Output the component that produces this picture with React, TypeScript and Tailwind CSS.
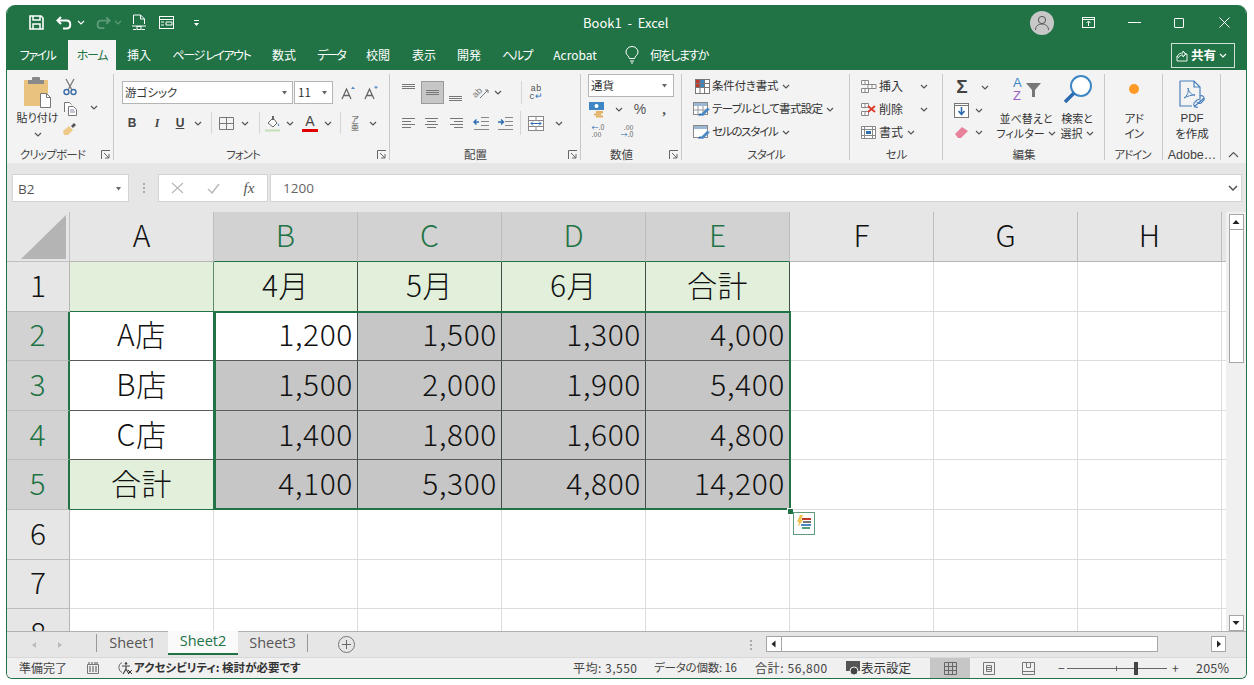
import React from "react";

const jp = "[font-family:'Noto_Sans_CJK_JP','Liberation_Sans',sans-serif] [font-feature-settings:'palt']";

function Caret({ className = "", color = "#555" }: { className?: string; color?: string }) {
  return (
    <svg width="8" height="5" viewBox="0 0 8 5" className={className}>
      <path d="M1 1l3 3 3-3" fill="none" stroke={color} strokeWidth="1.2" />
    </svg>
  );
}
function Tri({ className = "" }: { className?: string }) {
  return (
    <svg width="7" height="4" viewBox="0 0 7 4" className={className}>
      <path d="M1 0h5L3.5 3.5z" fill="#666" />
    </svg>
  );
}
function Launcher() {
  return (
    <svg width="10" height="10" viewBox="0 0 10 10" className="absolute right-[3px] bottom-[3px]">
      <path d="M.5 9V.5H9M3 3l5 5M8 4v4H4" fill="none" stroke="#666" strokeWidth="1" />
    </svg>
  );
}
function Lines({ kind }: { kind: "l" | "c" | "r" | "t" | "m" | "b" }) {
  const rows =
    kind === "l"
      ? [[1, 14], [1, 10], [1, 14], [1, 10]]
      : kind === "c"
      ? [[1, 14], [3, 12], [1, 14], [3, 12]]
      : kind === "r"
      ? [[1, 14], [5, 14], [1, 14], [5, 14]]
      : [[1, 14], [1, 14], [1, 14]];
  const y0 = kind === "t" ? 2 : kind === "m" ? 5 : kind === "b" ? 9 : 3;
  return (
    <svg width="16" height="16" viewBox="0 0 16 16">
      {rows.map((r, i) => (
        <path key={i} d={`M${r[0]} ${y0 + i * (kind === "t" || kind === "m" || kind === "b" ? 2 : 3) + 0.5}H${r[1]}`} stroke="#777" strokeWidth="1" />
      ))}
    </svg>
  );
}
function IconSlot({ w, children, className = "" }: { w: string; children?: React.ReactNode; className?: string }) {
  return <div className={`${w} flex items-center justify-center shrink-0 ${className}`}>{children}</div>;
}
function VSep({ h = "h-[22px]" }: { h?: string }) {
  return <div className={`w-px ${h} bg-[#d6d6d6] shrink-0`} />;
}

function TitleBar() {
  return (
    <div className="h-[35px] bg-[#217346] flex items-center text-white relative shrink-0">
      <svg width="15" height="15" viewBox="0 0 15 15" className="ml-[22px]">
        <path d="M1 1h11l2 2v11H1z" fill="none" stroke="#fff" strokeWidth="1.6" />
        <path d="M4 1v4h7V1M4 14V9h7v5" fill="none" stroke="#fff" strokeWidth="1.5" />
      </svg>
      <svg width="17" height="14" viewBox="0 0 17 14" className="ml-[12px]">
        <path d="M5 1L1.5 4.5 5 8M2 4.5h8.5c5 0 5 8 0 8H7" fill="none" stroke="#fff" strokeWidth="2" />
      </svg>
      <Caret className="ml-[4px]" color="#fff" />
      <svg width="16" height="14" viewBox="0 0 17 14" className="ml-[10px]">
        <path d="M12 1l3.5 3.5L12 8M15 4.5H6.5c-5 0-5 8 0 8H10" fill="none" stroke="#5f9a7b" strokeWidth="2" />
      </svg>
      <Caret className="ml-[3px]" color="#5f9a7b" />
      <svg width="14" height="17" viewBox="0 0 14 17" className="ml-[10px]">
        <path d="M1.5 10V1h7l4 4v5M8.5 1v4h4" fill="none" stroke="#fff" strokeWidth="1" />
        <path d="M0 12h14M1 15.5h3M6 15.5h2M10 15.5h3" stroke="#fff" strokeWidth="1.2" fill="none" />
        <rect x="5" y="12.5" width="4" height="3" fill="none" stroke="#fff" />
      </svg>
      <svg width="15" height="13" viewBox="0 0 15 13" className="ml-[13px]">
        <rect x=".5" y=".5" width="14" height="12" fill="none" stroke="#fff" />
        <path d="M.5 3.5h14M2 6h3M2 9h3M7 6h6v3H7z" stroke="#fff" fill="none" />
      </svg>
      <svg width="7" height="8" viewBox="0 0 7 8" className="ml-[19px]">
        <path d="M1 1.5h5" stroke="#fff" />
        <path d="M1 4h5L3.5 7z" fill="#fff" />
      </svg>
      <div className={`absolute left-[576px] top-[9px] text-[13px] leading-[18px] ${jp} whitespace-pre`}>Book1  -  Excel</div>
      <div className="ml-auto flex items-center">
        <div className="w-[24px] h-[24px] rounded-full bg-[#c8c8c8] flex items-center justify-center">
          <svg width="16" height="16" viewBox="0 0 16 16">
            <circle cx="8" cy="5" r="3.6" fill="none" stroke="#555" />
            <path d="M1.5 15c0-4 3-6 6.5-6s6.500 2 6.500 6" fill="none" stroke="#555" />
          </svg>
        </div>
        <svg width="13" height="11" viewBox="0 0 13 11" className="ml-[28px]">
          <rect x=".5" y=".5" width="12" height="10" fill="none" stroke="#fff" />
          <path d="M.5 2.500h12" stroke="#fff" />
          <path d="M6.500 9V4.500M4.500 6l2-2 2 2" stroke="#fff" fill="none" />
        </svg>
        <div className="ml-[33px] w-[13px] h-px bg-white" />
        <div className="ml-[33px] w-[10px] h-[10px] border border-white rounded-[1px]" />
        <svg width="11" height="11" viewBox="0 0 11 11" className="ml-[35px] mr-[16px]">
          <path d="M.5.500l10 10M10.500.500l-10 10" stroke="#fff" />
        </svg>
      </div>
    </div>
  );
}

function TabBar() {
  const tabs: [string, string][] = [
    ["ファイル", "w-[61px] tracking-[-1.5px]"],
    ["ホーム", "w-[48px] tracking-[-1.3px]"],
    ["挿入", "w-[46px]"],
    ["ページ レイアウト", "w-[99px] tracking-[-1.4px]"],
    ["数式", "w-[46px]"],
    ["データ", "w-[48px] tracking-[-2px]"],
    ["校閲", "w-[46px]"],
    ["表示", "w-[46px]"],
    ["開発", "w-[44px]"],
    ["ヘルプ", "w-[52px] tracking-[-1.6px]"],
    ["Acrobat", "w-[64px]"],
  ];
  return (
    <div className={`h-[30px] bg-[#217346] flex items-stretch text-white text-[12px] ${jp} shrink-0 relative`}>
      {tabs.map(([t, w]) =>
        t === "ホーム" ? (
          <div key={t} className={`${w} bg-[#f3f3f3] text-[#217346] flex items-center justify-center`}>
            {t}
          </div>
        ) : (
          <div key={t} className={`${w} flex items-center justify-center whitespace-nowrap`}>
            {t}
          </div>
        )
      )}
      <svg width="14" height="18" viewBox="0 0 14 18" className="ml-[18px] mt-[6px]">
        <path d="M4.500 12.500C4 10 1 9 1 6a6 5.500 0 0 1 12 0c0 3-3 4-3.500 6.500zM5 15h4M6 17h2" fill="none" stroke="#fff" />
      </svg>
      <div className="ml-[11px] flex items-center tracking-[-1.5px]">何をしますか</div>
      <div className="absolute right-[11px] top-[3px] w-[64px] h-[25px] border border-[#cfe0d6] flex items-center pl-[4px] font-bold text-[12.5px]">
        <svg width="12" height="12" viewBox="0 0 12 12">
          <path d="M1 6v5h10V4H8M1 7c1-3 3-4 6-4V1l3 3-3 3V5C5 5 3 6 2 8" fill="none" stroke="#fff" strokeWidth=".9" />
        </svg>
        <span className="ml-[3px]">共有</span>
        <Caret className="ml-[3px]" color="#fff" />
      </div>
    </div>
  );
}

function Group({ w, label, launcher, children, sep = true, labelClass = "" }: { w: string; label: string; launcher?: boolean; children: React.ReactNode; sep?: boolean; labelClass?: string }) {
  return (
    <div className={`${w} shrink-0 relative flex flex-col pt-[4px]`}>
      <div className="flex-1 min-h-0">{children}</div>
      <div className={`h-[16px] flex items-center justify-center text-[11.5px] text-[#444] whitespace-nowrap ${labelClass}`}>{label}</div>
      {launcher && <Launcher />}
      {sep && <div className="absolute right-0 top-[4px] bottom-[3px] w-px bg-[#c8c8c8]" />}
    </div>
  );
}

function ClipboardGroup() {
  return (
    <div className="flex pl-[10px] h-full">
      <div className="w-[41px] flex flex-col items-center">
        <svg width="30" height="33" viewBox="0 0 30 33" className="mt-[2px]">
          <rect x="1" y="4" width="24" height="26" rx="1" fill="#e9c27e" />
          <rect x="9" y="1" width="8" height="4" rx="1" fill="#888" />
          <rect x="5" y="4" width="16" height="4" fill="#8a8a8a" />
          <path d="M17.500 17.500h6l4 4v10h-10z" fill="#fff" stroke="#777" />
          <path d="M23.500 17.500v4h4" fill="none" stroke="#777" />
        </svg>
        <div className="text-[11px] leading-[16px] text-[#333] whitespace-nowrap">貼り付け</div>
        <Caret className="mt-[7px]" />
      </div>
      <div className="w-[18px] ml-[3px] flex flex-col items-center mt-[4px]">
        <svg width="16" height="18" viewBox="0 0 16 18">
          <path d="M4 1l6 11M12 1L6 12" stroke="#777" strokeWidth="1.3" fill="none" />
          <circle cx="4.500" cy="14" r="2.500" fill="none" stroke="#3c6ea8" strokeWidth="1.400" />
          <circle cx="11.500" cy="14" r="2.500" fill="none" stroke="#3c6ea8" strokeWidth="1.400" />
        </svg>
        <svg width="15" height="15" viewBox="0 0 15 15" className="mt-[5px]">
          <path d="M1.500 11V1.500h5l2 2M5.500 5.500h5l3 3v6h-8z" fill="#fff" stroke="#777" />
          <path d="M7 9h4M7 11h5" stroke="#88a" />
        </svg>
        <svg width="16" height="14" viewBox="0 0 16 14" className="mt-[6px]">
          <path d="M1 9l6-5 4 4-5 5H2z" fill="#efc98a" />
          <path d="M9 4l3-3 2 2-3 3z" fill="#555" />
        </svg>
      </div>
      <Caret className="ml-[11px] mt-[31px]" />
    </div>
  );
}

function GrowFont({ up }: { up?: boolean }) {
  return (
    <svg width="15" height="14" viewBox="0 0 15 14">
      <path d="M1 13L5.500 3 10 13M2.800 9.500h5.500" fill="none" stroke="#666" strokeWidth="1.300" />
      <path d={up ? "M10 3l2-2.500L14 3z" : "M10 .5l2 2.500L14 .5z"} fill="#4a88c7" />
    </svg>
  );
}

function FontGroup() {
  return (
    <div className="pl-[8px] pt-[7px]">
      <div className="flex items-center h-[23px]">
        <div className="w-[171px] h-[23px] bg-white border border-[#b5b5b5] flex items-center pl-[2px] text-[11.500px] text-[#333]">
          游ゴシック
          <Tri className="ml-auto mr-[4px]" />
        </div>
        <div className="w-[39px] ml-[1px] h-[23px] bg-white border border-[#b5b5b5] flex items-center pl-[3px] text-[11.500px] text-[#333]">
          11
          <Tri className="ml-auto mr-[4px]" />
        </div>
        <IconSlot w="w-[30px]"><GrowFont up /></IconSlot>
        <IconSlot w="w-[16px]"><GrowFont /></IconSlot>
      </div>
      <div className="flex items-center h-[22px] mt-[8px] text-[#444]">
        <IconSlot w="w-[20px]"><span className="font-bold text-[12px] [font-family:'Liberation_Sans']">B</span></IconSlot>
        <IconSlot w="w-[28px]" className="ml-[1px]"><span className="italic font-bold text-[12px] [font-family:'Liberation_Serif']">I</span></IconSlot>
        <IconSlot w="w-[18px]"><span className="underline font-bold text-[12px] [font-family:'Liberation_Sans']">U</span></IconSlot>
        <IconSlot w="w-[16px]" className="ml-[1px]"><Caret /></IconSlot>
        <IconSlot w="w-[5px]" className="ml-[3px]"><VSep /></IconSlot>
        <IconSlot w="w-[25px]"><svg width="15" height="13" viewBox="0 0 15 13"><path d="M.5.500h14v12H.5zM7.500.500v12M.5 6.500h14" fill="none" stroke="#777" /></svg></IconSlot>
        <IconSlot w="w-[12px]"><Caret /></IconSlot>
        <IconSlot w="w-[12px]" className="ml-[2px]"><VSep /></IconSlot>
        <IconSlot w="w-[16px]">
          <svg width="16" height="17" viewBox="0 0 16 17">
            <path d="M3 8l5-5 4 5-4 4z" fill="#fff" stroke="#666" />
            <path d="M7 1h2v4H7z" fill="#666" />
            <path d="M13 8c1 1.500 1.500 2.500 1 3s-1.500 0-1-3z" fill="#4a88c7" />
            <rect x="0" y="14.500" width="15" height="2" fill="#c5dfb5" />
          </svg>
        </IconSlot>
        <IconSlot w="w-[18px]"><Caret /></IconSlot>
        <IconSlot w="w-[22px]">
          <div className="flex flex-col items-center leading-[14px]">
            <span className="text-[14px] leading-[13px] [font-family:'Liberation_Sans'] text-[#444]">A</span>
            <div className="w-[16px] h-[3px] bg-[#e00000] mt-[1px]" />
          </div>
        </IconSlot>
        <IconSlot w="w-[14px]"><Caret /></IconSlot>
        <IconSlot w="w-[11px]"><VSep /></IconSlot>
        <IconSlot w="w-[18px]">
          <span className="text-[8px] leading-[8px] flex flex-col items-center text-[#555]"><span>ア</span><span>亜</span></span>
        </IconSlot>
        <IconSlot w="w-[18px]"><Caret /></IconSlot>
      </div>
    </div>
  );
}

function Indent({ flip }: { flip?: boolean }) {
  return (
    <svg width="17" height="15" viewBox="0 0 17 15">
      <path d="M8 1.500h8M8 5.500h8M8 9.500h8M1 13.500h15" stroke="#888" />
      <path d={flip ? "M1 6h5M4 3.500L6.500 6 4 8.500" : "M6 6H1M3.500 3.500L1 6l2.500 2.500"} stroke="#2b6cb0" strokeWidth="1.400" fill="none" />
    </svg>
  );
}

function AlignGroup() {
  return (
    <div className="pl-[9px] pt-[7px]">
      <div className="flex items-center h-[23px]">
        <IconSlot w="w-[20px]" className="-mt-[5px]"><Lines kind="t" /></IconSlot>
        <IconSlot w="w-[23px]" className="ml-[2px] h-[23px] bg-[#c6c6c6] border border-[#9a9a9a]"><Lines kind="m" /></IconSlot>
        <IconSlot w="w-[24px]" className="mt-[4px]"><Lines kind="b" /></IconSlot>
        <IconSlot w="w-[24px]" className="ml-[1px]">
          <svg width="18" height="16" viewBox="0 0 18 16">
            <text x="1" y="11" fontSize="9" fill="#777" fontFamily="Liberation Sans" transform="rotate(-45 5 9)">ab</text>
            <path d="M8 13L16 5M16 5h-3M16 5v3" fill="none" stroke="#777" />
          </svg>
        </IconSlot>
        <IconSlot w="w-[10px]"><Caret /></IconSlot>
        <IconSlot w="w-[34px]" className="ml-[1px]"><VSep h="h-[23px]" /></IconSlot>
        <IconSlot w="w-[22px]" className="-ml-[13px]">
          <span className="flex flex-col items-center text-[9px] leading-[8px] text-[#555] [font-family:'Liberation_Mono']">
            <span>ab</span>
            <span>c<span className="text-[#2b6cb0]">↵</span></span>
          </span>
        </IconSlot>
      </div>
      <div className="flex items-center h-[22px] mt-[8px]">
        <IconSlot w="w-[20px]"><Lines kind="l" /></IconSlot>
        <IconSlot w="w-[26px]" className="ml-[0px]"><Lines kind="c" /></IconSlot>
        <IconSlot w="w-[24px]"><Lines kind="r" /></IconSlot>
        <IconSlot w="w-[24px]"><Indent /></IconSlot>
        <IconSlot w="w-[24px]"><Indent flip /></IconSlot>
        <IconSlot w="w-[7px]"><VSep h="h-[24px]" /></IconSlot>
        <IconSlot w="w-[22px]" className="ml-[1px]">
          <svg width="16" height="15" viewBox="0 0 16 15">
            <rect x=".5" y=".5" width="15" height="14" fill="#fff" stroke="#888" />
            <path d="M.5 4.500h15M.5 10.500h15M8 .5v4M8 10.500v4" stroke="#888" fill="none" />
            <path d="M3 7.500h10M5 5.500l-2 2 2 2M11 5.500l2 2-2 2" stroke="#2b6cb0" fill="none" />
          </svg>
        </IconSlot>
        <IconSlot w="w-[24px]"><Caret /></IconSlot>
      </div>
    </div>
  );
}

function NumberGroup() {
  return (
    <div className="pl-[7px]">
      <div className="w-[86px] h-[23px] bg-white border border-[#b5b5b5] flex items-center pl-[2px] text-[11.500px] text-[#333]">
        通貨
        <Tri className="ml-auto mr-[5px]" />
      </div>
      <div className="flex items-center h-[22px] mt-[1px]">
        <IconSlot w="w-[20px]">
          <svg width="18" height="17" viewBox="0 0 18 17">
            <rect x="0" y="1" width="15" height="8" fill="#3f86c4" />
            <circle cx="7.500" cy="5" r="2" fill="#fff" />
            <rect x="7" y="10" width="7" height="2.500" fill="#e2b060" />
            <rect x="5" y="12.500" width="7" height="2" fill="#e2b060" />
            <rect x="7" y="14.500" width="7" height="2" fill="#e2b060" />
          </svg>
        </IconSlot>
        <IconSlot w="w-[18px]" className="ml-[2px]"><Caret /></IconSlot>
        <IconSlot w="w-[24px]"><span className="text-[14px] text-[#555] [font-family:'Liberation_Sans']">%</span></IconSlot>
        <IconSlot w="w-[24px]"><span className="text-[15px] font-bold text-[#555] [font-family:'Liberation_Serif']">,</span></IconSlot>
      </div>
      <div className="flex items-center h-[22px]">
        <IconSlot w="w-[20px]">
          <span className="flex flex-col items-start text-[7px] leading-[7px] text-[#666]"><span><span className="text-[#2b6cb0]">←</span>.0</span><span>.00</span></span>
        </IconSlot>
        <IconSlot w="w-[26px]" className="ml-[6px]">
          <span className="flex flex-col items-end text-[7px] leading-[7px] text-[#666]"><span>.00</span><span><span className="text-[#2b6cb0]">→</span>.0</span></span>
        </IconSlot>
      </div>
    </div>
  );
}

function StyleIcon({ kind }: { kind: number }) {
  if (kind === 0)
    return (
      <svg width="15" height="15" viewBox="0 0 15 15">
        <rect x=".5" y=".5" width="14" height="14" fill="#fff" stroke="#777" />
        <rect x="1" y="1" width="4" height="3" fill="#c0392b" />
        <rect x="5" y="5" width="4" height="3" fill="#3f86c4" />
        <rect x="1" y="5" width="4" height="3" fill="#c0392b" />
        <rect x="5" y="1" width="4" height="3" fill="#3f86c4" />
        <path d="M5 .5v14M9.500.5v14M.5 4.500h14M.5 8.500h14" stroke="#777" fill="none" />
      </svg>
    );
  return (
    <svg width="18" height="15" viewBox="0 0 18 15">
      <rect x=".5" y=".5" width="14" height="12" fill="#fff" stroke="#888" />
      <rect x="1" y="1" width="13" height="3" fill="#9bb7d4" />
      {kind === 1 && <path d="M5 4v8M10 4v8M1 8h13" stroke="#999" />}
      <path d="M7 13l7-7 3 1-7 7z" fill="#4a88c7" />
      <path d="M5 14l2-3 2 2z" fill="#2b6cb0" />
    </svg>
  );
}

function StyleGroup() {
  const rows: [string, string][] = [
    ["条件付き書式", "tracking-[-0.2px]"],
    ["テーブルとして書式設定", "tracking-[-0.7px]"],
    ["セルのスタイル", "tracking-[-1.2px]"],
  ];
  return (
    <div className="pl-[11px] flex flex-col pt-[1px] gap-[1px]">
      {rows.map(([r, t], i) => (
        <div key={r} className="h-[22px] flex items-center text-[11.5px] text-[#333] whitespace-nowrap">
          <IconSlot w="w-[18px]"><StyleIcon kind={i} /></IconSlot>
          <span className={`ml-[1px] ${t}`}>{r}</span>
          <Caret className="ml-[4px]" />
        </div>
      ))}
    </div>
  );
}

function CellIcon({ kind }: { kind: number }) {
  return (
    <svg width="17" height="15" viewBox="0 0 17 15">
      {kind === 2 ? (
        <>
          <path d="M1.500 1.500h14v12h-14zM1.500 4.500h14M1.500 10.500h14M4.500 1.500v12M12.500 1.500v12" fill="#fff" stroke="#888" />
          <rect x="6" y="6" width="5" height="3" fill="#2b6cb0" />
        </>
      ) : (
        <>
          <path d="M1.500 1.500h7v4h-7zM1.500 9.500h7v4h-7zM5 1.500v4M5 9.500v4" fill="#fff" stroke="#888" />
          {kind === 0 ? (
            <path d="M8 5.500h8v4H8zM12 5.500v4" fill="#fff" stroke="#888" />
          ) : (
            <path d="M8 4l7 6M15 4l-7 6" stroke="#d9392b" strokeWidth="1.800" />
          )}
        </>
      )}
    </svg>
  );
}

function CellsGroup() {
  const rows: [string, string][] = [["挿入", "ml-[17px]"], ["削除", "ml-[17px]"], ["書式", "ml-[4px]"]];
  return (
    <div className="pl-[9px] flex flex-col pt-[1px] gap-[1px]">
      {rows.map(([r, m], i) => (
        <div key={r} className="h-[22px] flex items-center text-[12px] text-[#333]">
          <IconSlot w="w-[18px]"><CellIcon kind={i} /></IconSlot>
          <span className="ml-[2px]">{r}</span>
          <Caret className={m} />
        </div>
      ))}
    </div>
  );
}

function EditGroup() {
  return (
    <div className="flex pl-[8px] h-full">
      <div className="w-[50px] flex flex-col pt-[1px]">
        <div className="h-[24px] flex items-center">
          <span className="w-[22px] text-center text-[19px] leading-[20px] text-[#444] [font-family:'Liberation_Sans'] font-bold">Σ</span>
          <Caret className="ml-[8px]" />
        </div>
        <div className="h-[22px] flex items-center">
          <IconSlot w="w-[20px]">
            <svg width="15" height="15" viewBox="0 0 15 15">
              <rect x=".5" y=".5" width="14" height="14" fill="#fff" stroke="#777" />
              <path d="M.5 2.500h14" stroke="#777" />
              <path d="M7.500 4v7M4.500 8l3 3.500 3-3.500" fill="none" stroke="#2b6cb0" strokeWidth="1.600" />
            </svg>
          </IconSlot>
          <Caret className="ml-[4px]" />
        </div>
        <div className="h-[22px] flex items-center">
          <IconSlot w="w-[20px]">
            <svg width="15" height="13" viewBox="0 0 15 13"><path d="M1 8l7-7 6 4-7 7H4z" fill="#e8829a" /></svg>
          </IconSlot>
          <Caret className="ml-[4px]" />
        </div>
      </div>
      <div className="w-[52px] -ml-[1px] flex flex-col items-center text-[11px] leading-[15px] text-[#333] whitespace-nowrap">
        <svg width="30" height="28" viewBox="0 0 30 28" className="ml-[1px]">
          <text x="1" y="13" fontSize="13" fill="#3f86c4" fontFamily="Liberation Sans">A</text>
          <text x="1" y="26" fontSize="13" fill="#9b5fc0" fontFamily="Liberation Sans">Z</text>
          <path d="M14 9h15l-6 7v7h-3v-7z" fill="#777" />
        </svg>
        <div className="mt-[9px]">並べ替えと</div>
        <div className="flex items-center">フィルター<Caret className="ml-[3px]" /></div>
      </div>
      <div className="w-[50px] flex flex-col items-center text-[11px] leading-[15px] text-[#333] whitespace-nowrap">
        <svg width="30" height="30" viewBox="0 0 30 30" className="ml-[2px]">
          <circle cx="18" cy="12" r="10" fill="#fff" stroke="#3f86c4" strokeWidth="2" />
          <path d="M11 19L2 28" stroke="#2b6cb0" strokeWidth="3.500" />
        </svg>
        <div className="mt-[7px]">検索と</div>
        <div className="flex items-center">選択<Caret className="ml-[3px]" /></div>
      </div>
    </div>
  );
}

function Ribbon() {
  return (
    <div className={`h-[93px] bg-[#f3f3f3] flex shrink-0 relative ${jp}`}>
      <Group w="w-[107px]" label="クリップボード" launcher labelClass="-ml-[16px] tracking-[-0.8px]"><ClipboardGroup /></Group>
      <Group w="w-[276px]" label="フォント" launcher labelClass="-ml-[18px] tracking-[-1px]"><FontGroup /></Group>
      <Group w="w-[191px]" label="配置" launcher labelClass="-ml-[20px]"><AlignGroup /></Group>
      <Group w="w-[101px]" label="数値" launcher labelClass="-ml-[20px]"><NumberGroup /></Group>
      <Group w="w-[168px]" label="スタイル" labelClass="tracking-[-1px]"><StyleGroup /></Group>
      <Group w="w-[93px]" label="セル"><CellsGroup /></Group>
      <Group w="w-[162px]" label="編集"><EditGroup /></Group>
      <Group w="w-[58px]" label="アドイン" labelClass="tracking-[-1px] -ml-[3px]">
        <div className="flex flex-col items-center text-[11.5px] leading-[15px] text-[#333] pt-[10px] tracking-[-0.5px]">
          <div className="w-[10px] h-[10px] rounded-full bg-[#ff9a28] blur-[0.5px]" />
          <div className="mt-[17px]">アド</div>
          <div>イン</div>
        </div>
      </Group>
      <Group w="w-[58px]" label="Adobe…" labelClass="text-[12.5px] [font-family:'Liberation_Sans']">
        <div className="flex flex-col items-center text-[11.5px] leading-[15px] text-[#333] pt-[6px]">
          <svg width="30" height="30" viewBox="0 0 30 30">
            <path d="M3 1h14l6 6v12M3 1v25h12M17 1v6h6" fill="none" stroke="#4a7fbd" strokeWidth="1.200" />
            <path d="M7 18c3-2 5-6 4-10 1 4 3 7 7 7-4 0-7 1-11 3z" fill="none" stroke="#4a7fbd" />
            <path d="M17 27l10-9M21 27a3 3 0 0 1-4-4l3-3a3 3 0 0 1 4 1M23 16a3 3 0 0 1 4 4l-3 3a3 3 0 0 1-4-1" fill="none" stroke="#4a7fbd" strokeWidth="1.100" />
          </svg>
          <div className="mt-[1px] [font-family:'Liberation_Sans']">PDF</div>
          <div>を作成</div>
        </div>
      </Group>
      <div className="flex-1 flex items-end justify-center pb-[5px]">
        <svg width="11" height="7" viewBox="0 0 11 7"><path d="M1 6l4.500-4.500L10 6" fill="none" stroke="#555" strokeWidth="1.100" /></svg>
      </div>
    </div>
  );
}

function FormulaBar() {
  return (
    <div className={`h-[49px] bg-[#e6e6e6] flex items-start pt-[11px] shrink-0 ${jp}`}>
      <div className="ml-[5px] w-[117px] h-[28px] bg-white border border-[#d4d4d4] flex items-center pl-[5px] pt-[2px] text-[13.5px] text-[#555] [font-family:'Open_Sans']">
        B2
        <Tri className="ml-auto mr-[6px]" />
      </div>
      <div className="w-[29px] h-[28px] flex flex-col items-center justify-center gap-[2px]">
        <div className="w-[2px] h-[2px] bg-[#aaa]" />
        <div className="w-[2px] h-[2px] bg-[#aaa]" />
        <div className="w-[2px] h-[2px] bg-[#aaa]" />
      </div>
      <div className="w-[110px] h-[28px] bg-white border border-[#d4d4d4] flex items-center">
        <IconSlot w="w-[36px]">
          <svg width="13" height="12" viewBox="0 0 13 12"><path d="M1 1l11 10M12 1L1 11" stroke="#bbb" strokeWidth="1.300" /></svg>
        </IconSlot>
        <IconSlot w="w-[36px]">
          <svg width="13" height="12" viewBox="0 0 13 12"><path d="M1 7l4 4 7-9" stroke="#bbb" strokeWidth="1.500" fill="none" /></svg>
        </IconSlot>
        <IconSlot w="w-[36px]">
          <span className="italic text-[15px] text-[#555] [font-family:'Liberation_Serif']">fx</span>
        </IconSlot>
      </div>
      <div className="ml-[2px] w-[972px] h-[28px] bg-white border border-[#d4d4d4] flex items-center pl-[12px] text-[13.5px] text-[#666] [font-family:'Open_Sans']">
        1200
        <svg width="10" height="6" viewBox="0 0 10 6" className="ml-auto mr-[3px]"><path d="M1 1l4 4 4-4" fill="none" stroke="#555" strokeWidth="1.500" /></svg>
      </div>
    </div>
  );
}

const data: (string | null)[][] = [
  [null, "4月", "5月", "6月", "合計"],
  ["A店", "1,200", "1,500", "1,300", "4,000"],
  ["B店", "1,500", "2,000", "1,900", "5,400"],
  ["C店", "1,400", "1,800", "1,600", "4,800"],
  ["合計", "4,100", "5,300", "4,800", "14,200"],
];

function Cell({ r, c }: { r: number; c: number }) {
  if (r < 5 && c < 5) {
    const v = data[r][c];
    const numeric = r > 0 && c > 0;
    const green = r === 0 || (r === 4 && c === 0);
    const grey = numeric && !(r === 1 && c === 1);
    const bg = green ? "bg-[#e2efda]" : grey ? "bg-[#c6c6c6]" : "bg-white";
    const right = c === 0 ? (r === 0 ? "border-r-[#5c8a6f]" : "border-r-[#217346]") : "border-r-[#404f47]";
    const bottom = r === 0 ? "border-b-[#217346]" : r === 4 ? "border-b-[#217346]" : "border-b-[#5a5a5a]";
    return (
      <div className={`${bg} border-r border-b ${right} ${bottom} flex items-center ${numeric ? "justify-end pr-[4px]" : "justify-center"} pb-[4px] text-[30px] tracking-[0.6px] text-[#111] font-light`}>
        {v}
      </div>
    );
  }
  return <div className="bg-white border-r border-b border-[#dcdcdc]" />;
}

function Grid() {
  const cols = ["A", "B", "C", "D", "E", "F", "G", "H"];
  const rows = [1, 2, 3, 4, 5, 6, 7, 8];
  return (
    <div className={`flex-1 min-h-0 flex bg-[#e6e6e6] overflow-hidden ${jp}`}>
      <div className="w-[1220px] relative overflow-hidden grid grid-cols-[63px_repeat(8,144px)_5px] grid-rows-[50px_repeat(8,49.6px)] content-start">
        <div className="bg-[#e6e6e6] border-b border-r border-[#c0c0c0] relative flex items-end justify-end pr-[3px] pb-[2px]">
          <svg width="45" height="44" viewBox="0 0 45 44"><path d="M45 0v44H0z" fill="#b4b4b4" /></svg>
        </div>
        {cols.map((c, i) => {
          const sel = i >= 1 && i <= 4;
          return (
            <div key={c} className={`${sel ? "bg-[#d2d2d2] text-[#217346] border-b-[#217346]" : "bg-[#e6e6e6] text-[#111] border-b-[#b5b5b5]"} border-r border-r-[#bdbdbd] border-b flex items-center justify-center pb-[4px] text-[30px] font-light`}>
              {c}
            </div>
          );
        })}
        <div className="bg-[#e6e6e6] border-b border-[#b5b5b5]" />
        {rows.map((r) => {
          const sel = r >= 2 && r <= 5;
          return (
            <React.Fragment key={r}>
              <div className={`${sel ? "bg-[#d2d2d2] text-[#217346] border-r-2 border-r-[#217346]" : "bg-[#e6e6e6] text-[#111] border-r border-r-[#b5b5b5]"} border-b border-b-[#bdbdbd] flex items-center justify-center pb-[4px] text-[30px] font-light`}>
                {r}
              </div>
              {cols.map((_, c) => (
                <Cell key={c} r={r - 1} c={c} />
              ))}
              <div className="bg-white border-b border-[#dcdcdc]" />
            </React.Fragment>
          );
        })}
        {/* selection outline over B2:E5 */}
        <div className="absolute left-[207px] top-[99px] w-[577px] h-[199px] border-2 border-[#217346] pointer-events-none" />
        <div className="absolute left-[780px] top-[296px] w-[7px] h-[7px] bg-[#217346] border border-white" />
        {/* quick analysis */}
        <div className="absolute left-[786px] top-[300px] w-[22px] h-[23px] bg-white border border-[#5f9a7b] flex items-center justify-center">
          <svg width="17" height="17" viewBox="0 0 17 17">
            <path d="M4 0L1 7h2l-1 5 5-7H5l2-5z" fill="#f2c14e" />
            <path d="M6 3h9v2H6z" fill="#c0392b" />
            <path d="M7 6h8v2H7z" fill="#777" />
            <path d="M5 9h10v2H5z" fill="#4a88c7" />
            <path d="M6 12h8v2H6z" fill="#54a27a" />
          </svg>
        </div>
      </div>
      <div className="w-[20px] shrink-0 bg-[#f0f0f0] flex flex-col items-center pt-[2px]">
        <ScrollBtn dir="up" />
        <div className="w-[15px] h-[134px] bg-white border border-[#a6a6a6] -mt-px shrink-0" />
        <div className="flex-1" />
        <ScrollBtn dir="down" />
      </div>
    </div>
  );
}
function ScrollBtn({ dir }: { dir: "up" | "down" }) {
  const d = dir === "up" ? "M4 2l3.500 4h-7z" : "M.5 2h7L4 6z";
  return (
    <div className="w-[15px] h-[16px] bg-white border border-[#a6a6a6] flex items-center justify-center shrink-0">
      <svg width="8" height="8" viewBox="0 0 8 8"><path d={d} fill="#222" /></svg>
    </div>
  );
}

function SheetBar() {
  return (
    <div className={`h-[26px] bg-[#e6e6e6] border-t border-[#b0b0b0] flex items-stretch shrink-0 ${jp}`}>
      <div className="w-[89px] flex items-center">
        <svg width="6" height="8" viewBox="0 0 6 8" className="ml-[24px]"><path d="M5 1v6L1 4z" fill="#bbb" /></svg>
        <svg width="6" height="8" viewBox="0 0 6 8" className="ml-[20px]"><path d="M1 1v6l4-3z" fill="#bbb" /></svg>
      </div>
      <div className="w-px h-[18px] mt-[2px] bg-[#999]" />
      <div className="w-[71px] flex items-center justify-center pb-[3px] text-[14.5px] text-[#555] [font-family:'Open_Sans']">Sheet1</div>
      <div className="w-[70px] -mt-px h-[24px] bg-[#fafafa] border-b-2 border-[#217346] flex items-center justify-center pb-[2px] text-[14.5px] text-[#217346] [font-family:'Open_Sans']">Sheet2</div>
      <div className="w-[69px] flex items-center justify-center pb-[3px] text-[14.5px] text-[#555] [font-family:'Open_Sans']">Sheet3</div>
      <div className="w-px h-[18px] mt-[2px] bg-[#999]" />
      <div className="ml-[30px] w-[17px] h-[17px] mt-[4px] rounded-full border border-[#777] flex items-center justify-center">
        <svg width="9" height="9" viewBox="0 0 9 9"><path d="M4.500 0v9M0 4.500h9" stroke="#666" /></svg>
      </div>
      <div className="ml-[395px] flex flex-col justify-center gap-[2px]">
        <div className="w-[2px] h-[2px] bg-[#aaa]" />
        <div className="w-[2px] h-[2px] bg-[#aaa]" />
        <div className="w-[2px] h-[2px] bg-[#aaa]" />
      </div>
      <div className="ml-[14px] flex items-start pt-[4px] w-[460px]">
        <div className="w-[16px] h-[16px] bg-white border border-[#a6a6a6] flex items-center justify-center"><svg width="8" height="8" viewBox="0 0 8 8"><path d="M5.500.5v7L1.500 4z" fill="#222" /></svg></div>
        <div className="w-[376px] h-[16px] bg-white border-y border-r border-[#a6a6a6]" />
        <div className="flex-1" />
        <div className="w-[15px] h-[16px] bg-white border border-[#a6a6a6] flex items-center justify-center"><svg width="8" height="8" viewBox="0 0 8 8"><path d="M2 .5v7L6 4z" fill="#222" /></svg></div>
      </div>
    </div>
  );
}

function StatusBar() {
  return (
    <div className={`h-[21px] shrink-0 bg-[#f0f0f0] border-t border-[#d8d8d8] flex items-center text-[12px] text-[#444] ${jp} whitespace-nowrap`}>
      <span className="ml-[12px]">準備完了</span>
      <svg width="12" height="12" viewBox="0 0 12 12" className="ml-[20px]">
        <path d="M.5 2.500h11v9H.5z" fill="none" stroke="#777" />
        <path d="M2 0v2M5 0v2M8 0v2M10 0v2" stroke="#555" />
        <path d="M2 5h2M5 5h2M8 5h2M2 7h2M5 7h2M8 7h2M2 9h2M5 9h2M8 9h2" stroke="#555" />
      </svg>
      <svg width="15" height="14" viewBox="0 0 15 14" className="ml-[19px]">
        <path d="M4 1.500a5.500 5.500 0 0 0 0 10" fill="none" stroke="#666" />
        <circle cx="8" cy="2.500" r="1.300" fill="#444" />
        <path d="M4 5h8M8 5v3l-3 5M8 8l3 5" fill="none" stroke="#444" strokeWidth="1.200" />
        <path d="M10 9l4 4M14 9l-4 4" stroke="#333" />
      </svg>
      <span className="ml-[1px] w-[166px] font-bold text-[#333] text-[11.5px]">アクセシビリティ: 検討が必要です</span>
      <span className="ml-[273px] w-[65px] tracking-[0.5px]">平均: 3,550</span>
      <span className="ml-[16px] w-[85px] text-[11.5px] tracking-[-0.2px]">データの個数: 16</span>
      <span className="ml-[16px] w-[73px] tracking-[0.6px]">合計: 56,800</span>
      <svg width="15" height="15" viewBox="0 0 15 15" className="ml-[18px]">
        <rect x="0" y="0" width="14" height="10" fill="#555" />
        <circle cx="8" cy="10" r="4" fill="#444" stroke="#f0f0f0" />
      </svg>
      <span className="text-[#333] w-[50px] text-[12.5px]">表示設定</span>
      <div className="ml-[19px] w-[40px] h-[21px] bg-[#c6c6c6] flex items-center justify-center">
        <svg width="13" height="13" viewBox="0 0 13 13"><path d="M.5.500h12v12H.5zM4.500.500v12M8.500.500v12M.5 4.500h12M.5 8.500h12" fill="none" stroke="#666" /></svg>
      </div>
      <svg width="12" height="13" viewBox="0 0 12 13" className="ml-[13px]"><path d="M.5.500h11v12H.5zM3.500 3.500h5v6h-5zM3.500 5.500h5M3.500 7.500h5" fill="none" stroke="#777" /></svg>
      <svg width="13" height="13" viewBox="0 0 13 13" className="ml-[27px]"><path d="M.5.500h12v12H.5zM.5 9.500h12M4.500.500v5h4v-5" fill="none" stroke="#777" /></svg>
      <span className="ml-[23px] text-[12px] w-[8px]">−</span>
      <div className="ml-[1px] w-[100px] h-[13px] flex items-center relative">
        <div className="w-full h-px bg-[#666]" />
        <div className="absolute left-[49px] top-[4px] w-px h-[5px] bg-[#666]" />
        <div className="absolute left-[67px] top-0 w-[4px] h-[13px] bg-[#444]" />
      </div>
      <span className="ml-[5px] text-[12px] w-[8px]">+</span>
      <span className="ml-[16px] text-[12.5px] tracking-[0.2px]">205%</span>
    </div>
  );
}

export default function App() {
  return (
    <div className="w-[1254px] h-[685px] bg-white pt-[5px] pl-[6px] pr-[7px] pb-[6px] overflow-hidden">
      <div className="w-full h-full rounded-t-[9px] rounded-b-[6px] overflow-hidden border-x border-b border-[#217346] flex flex-col">
        <TitleBar />
        <TabBar />
        <Ribbon />
        <FormulaBar />
        <Grid />
        <SheetBar />
        <StatusBar />
      </div>
    </div>
  );
}
